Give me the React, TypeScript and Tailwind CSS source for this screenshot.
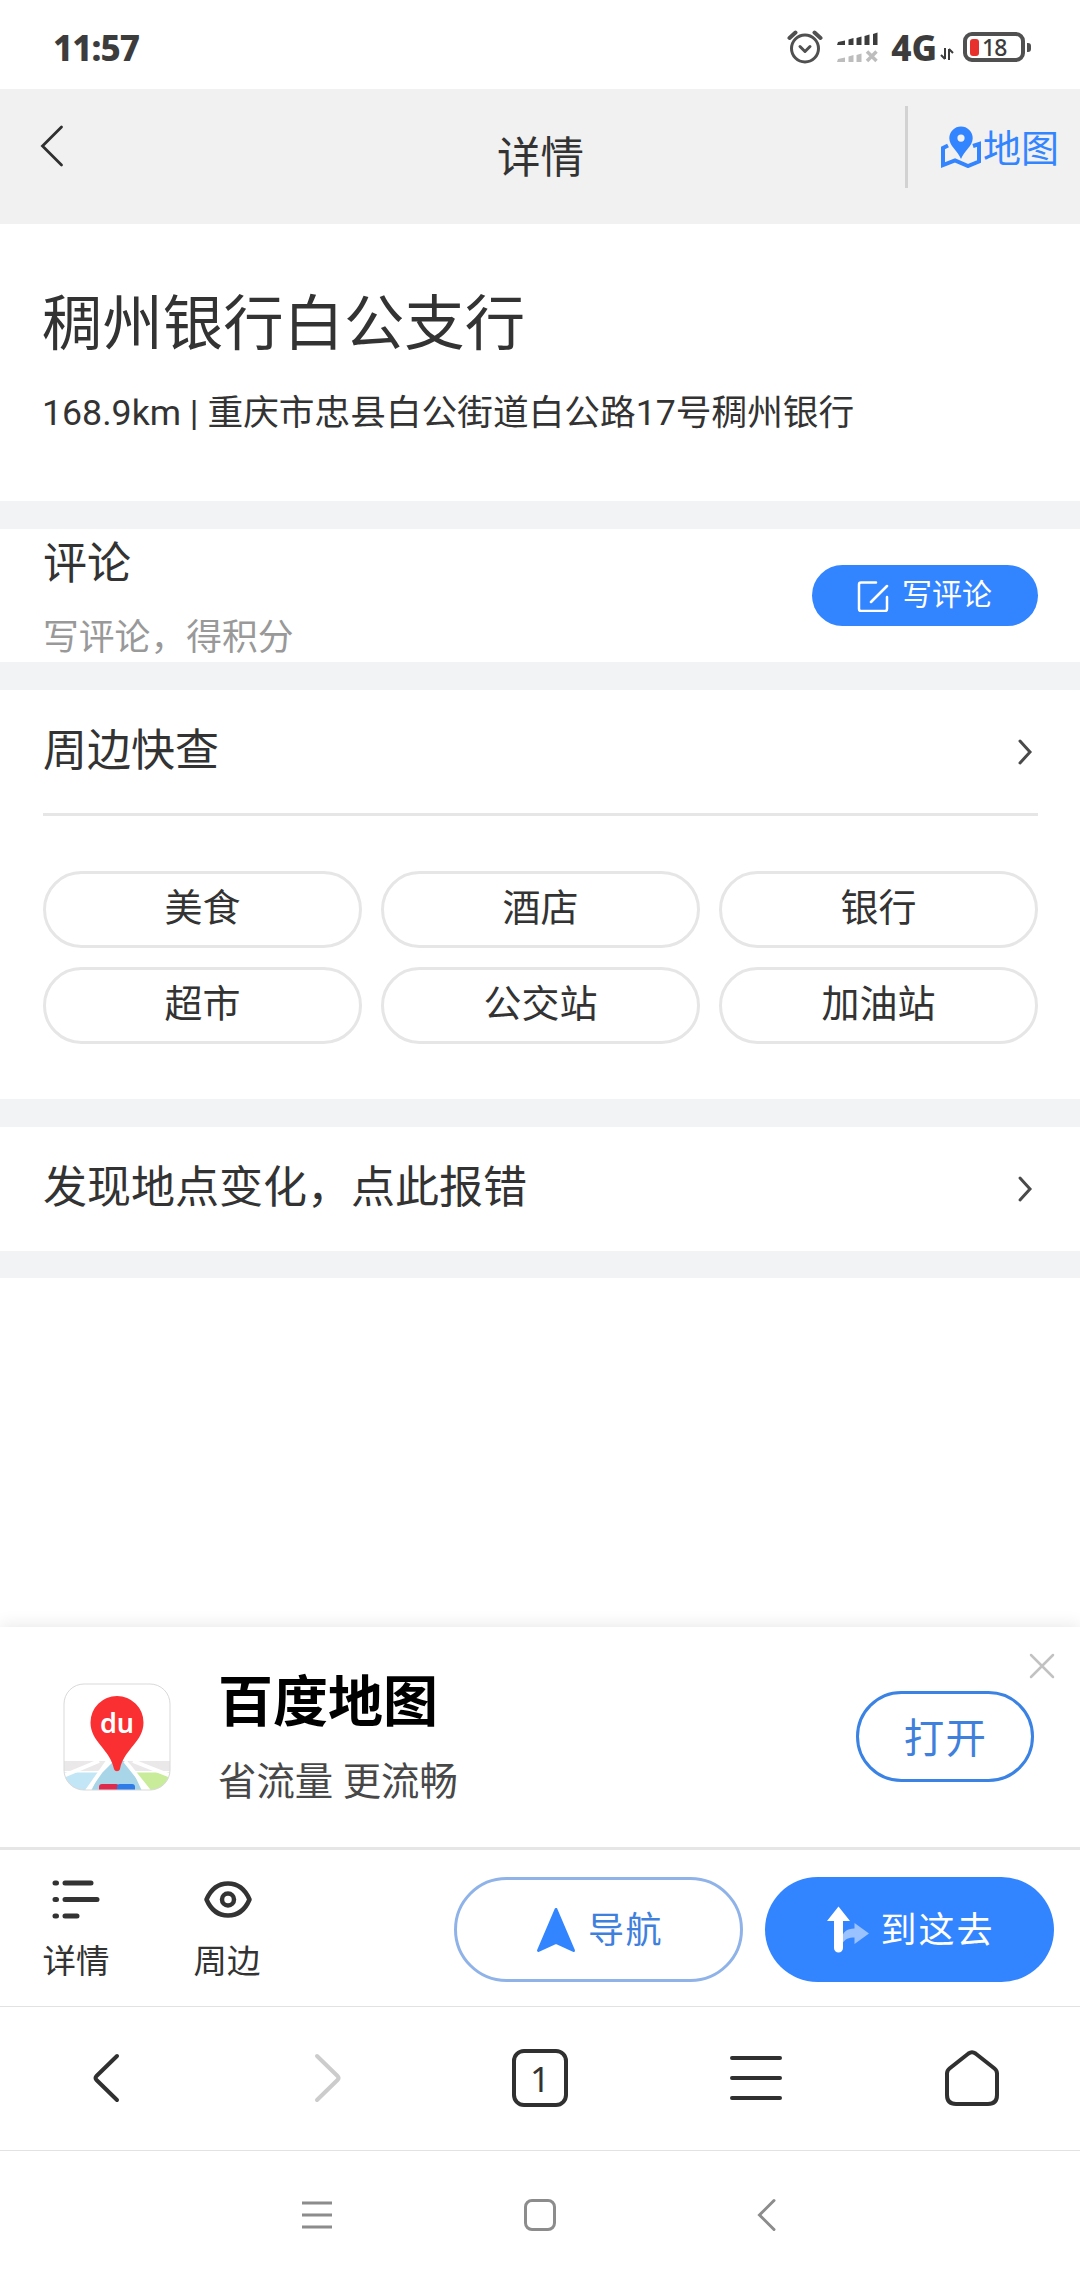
import React from 'react';

const nearby = ['美食', '酒店', '银行', '超市', '公交站', '加油站'];

const StatusBar: React.FC = () => (
  <div className="flex h-[89px] shrink-0 items-center bg-white pl-[53px] pr-[49px] text-[#3c3c3c]">
    <span className="mt-[5px] font-['Noto_Sans'] text-[35px] leading-none font-extrabold tracking-[-1px]">11:57</span>
    <div className="ml-auto flex items-center pt-[5px]">
      <svg width="36" height="36" viewBox="0 0 36 36" fill="none" stroke="#505050" strokeWidth="3" strokeLinecap="round" strokeLinejoin="round">
        <circle cx="18" cy="19.500" r="13.500" />
        <path d="M13 17.500l5 5 5-5" />
        <path d="M2.500 9L8.500 3.500M27.500 3.500l6 5.500" strokeWidth="4" />
      </svg>
      <svg className="ml-[14px]" width="42" height="36" viewBox="0 0 42 36">
        <g fill="#3c3c3c">
          <path d="M0 16l1-3 7-1.500V16zM11.500 10.500l5-1.500v7h-5zM19.500 9l5-1.500V16h-5zM27.500 7l5-1.500V16h-5zM36 5l4.500-1.500V16H36z" />
        </g>
        <g fill="#bdbdbd">
          <path d="M0 33l1-3 7-1.500V33zM11.500 27.500l5-1.500v7h-5zM19.500 26l5-1.500V33h-5z" />
        </g>
        <path d="M30 22.500l9.500 9.500M39.500 22.500L30 32" stroke="#bdbdbd" strokeWidth="3.500" />
      </svg>
      <span className="ml-[12px] font-['Noto_Sans'] text-[35px] leading-none font-extrabold">4G</span>
      <svg className="mt-[14px] ml-[3px]" width="14" height="14" viewBox="0 0 14 14" fill="none" stroke="#3c3c3c" strokeWidth="2">
        <path d="M5 1v11M5 12L1 8M9 13V2M9 2l4 4" />
      </svg>
      <div className="ml-[9px] flex h-[30px] w-[62px] items-center rounded-[9px] border-4 border-[#505050] pl-[3px]">
        <span className="h-[17px] w-[9px] rounded-[3px] bg-[#e8312c]" />
        <span className="ml-[3px] font-['Noto_Sans'] text-[23px] leading-none font-medium tracking-[-1px]">18</span>
      </div>
      <span className="ml-[2px] h-[9px] w-[4px] rounded-r-[3px] bg-[#505050]" />
    </div>
  </div>
);

const Header: React.FC = () => (
  <header className="grid h-[135px] shrink-0 grid-cols-[1fr_auto_1fr] bg-[#f1f1f1]">
    <svg className="mt-[35px] ml-[39px]" width="26" height="44" viewBox="0 0 26 44" fill="none" stroke="#2f2f2f" strokeWidth="2.800" strokeLinecap="round">
      <path d="M22.500 3L3.500 22l19 19" />
    </svg>
    <h1 className="mt-[40px] ml-px text-[43.5px] leading-[60px]">详情</h1>
    <div className="mt-[17px] ml-auto flex h-[82px] w-[175px] items-center border-l-[3px] border-[#d2d2d2] pl-[32px] text-[#3385ff]">
      <svg className="shrink-0" width="42" height="42" viewBox="0 0 42 42">
        <path d="M8 19.500l-5 2.500V39l12-4.500 13 5.500 11-4.500V18l-6 2" fill="none" stroke="#3385ff" strokeWidth="4" />
        <path fillRule="evenodd" fill="#3385ff" d="M21 0.500a11.700 11.700 0 0 1 11.700 11.700C32.700 20 24 25 21 33c-3-8-11.700-13-11.700-20.800A11.700 11.700 0 0 1 21 0.500zm0 8a3.600 3.600 0 1 0 0 7.200 3.600 3.600 0 0 0 0-7.200z" />
      </svg>
      <span className="mt-[4px] ml-[1px] text-[38px] leading-none whitespace-nowrap">地图</span>
    </div>
  </header>
);

const ArrowRight: React.FC = () => (
  <svg width="18" height="30" viewBox="0 0 18 30" fill="none" stroke="#4a4a4a" strokeWidth="3" strokeLinecap="round">
    <path d="M3 4l10 11L3 26" />
  </svg>
);

const Band: React.FC = () => <div className="h-[28px] shrink-0 bg-[#f2f3f5]" />;

const AppLogo: React.FC = () => (
  <svg width="108" height="108" viewBox="0 0 108 108">
    <defs>
      <clipPath id="logo">
        <rect x="1" y="1" width="106" height="106" rx="20" />
      </clipPath>
    </defs>
    <g clipPath="url(#logo)">
      <rect width="108" height="108" fill="#fff" />
      <path d="M0 78h108v10H0z" fill="#ebe8ea" />
      <path d="M0 89.500h37L22 108H0z" fill="#c2e6f6" />
      <path d="M71 89.500h37V108H88z" fill="#c9ec9b" />
      <path d="M43 78h22l14 30H28z" fill="#a9d5e8" />
      <path d="M0 93l36-15M36 90L48 78M24 108L45 78M108 93L70 78M86 108L62 78" stroke="#fff" strokeWidth="4" />
      <rect x="36" y="101" width="20" height="9" rx="3" fill="#de2b4d" />
      <rect x="54" y="101" width="18" height="9" rx="3" fill="#2f7be8" />
    </g>
    <path d="M54 13a26.500 26.500 0 0 1 26.500 26.500c0 19.500-19.500 26.500-23.500 46.500-1 3-5 3-6 0-4-20-23.500-27-23.500-46.500a26.500 26.500 0 0 1 26.500-26.500z" fill="#f92f31" />
    <text x="54" y="50" textAnchor="middle" fill="#fff" fontFamily="Noto Sans, sans-serif" fontWeight="600" fontSize="27">du</text>
    <rect x="1" y="1" width="106" height="106" rx="20" fill="none" stroke="#d9d9d9" />
  </svg>
);

const AppBanner: React.FC = () => (
  <div className="relative flex h-[223px] shrink-0 items-start border-b-[3px] border-[#e6e6e6] bg-white shadow-[0_-2px_16px_rgba(0,0,0,0.09)]">
    <div className="mt-[56px] ml-[63px]">
      <AppLogo />
    </div>
    <div className="mt-[40px] ml-[47px]">
      <p className="text-[55px] leading-[70px] font-bold text-black">百度地图</p>
      <p className="mt-[18px] text-[38.4px] leading-[54px] text-[#484848]">省流量 更流畅</p>
    </div>
    <button className="mt-[64px] mr-[46px] ml-auto flex h-[91px] w-[178px] items-center justify-center rounded-full border-[3px] border-[#3a82e4] pt-[5px] pl-px text-[40.5px] tracking-[1.2px] text-[#3f80dd]">
      打开
    </button>
    <svg className="absolute top-[25px] right-[24px]" width="28" height="28" viewBox="0 0 28 28" stroke="#c2c2c2" strokeWidth="2.500" strokeLinecap="round">
      <path d="M3 3l22 22M25 3L3 25" />
    </svg>
  </div>
);

const ActionBar: React.FC = () => (
  <div className="relative flex h-[157px] shrink-0 items-start border-b border-[#e2e2e2] bg-white">
    <div className="ml-[41px] flex w-[70px] flex-col items-center pt-[28px]">
      <svg width="50" height="43" viewBox="0 0 50 43" stroke="#333" strokeWidth="5" strokeLinecap="round">
        <path d="M4 5h1.500M4 21.500h1.500M4 38h1.500M14 5h26M14 21.500h32M14 38h12" />
      </svg>
      <span className="mt-[17px] text-[33.5px] leading-[48px] whitespace-nowrap">详情</span>
    </div>
    <div className="ml-[81px] flex w-[70px] flex-col items-center pt-[28px]">
      <svg className="ml-[2px]" width="50" height="43" viewBox="0 0 50 43" fill="none" stroke="#333" strokeWidth="4.500">
        <path d="M3.500 21.500C8 11 16 5.500 25 5.500S42 11 46.500 21.500C42 32 34 37.500 25 37.500S8 32 3.500 21.500z" strokeLinejoin="round" />
        <circle cx="25" cy="21.500" r="6" />
      </svg>
      <span className="mt-[17px] text-[33.5px] leading-[48px] whitespace-nowrap">周边</span>
    </div>
    <button className="mt-[27px] mr-[22px] ml-auto flex h-[105px] w-[289px] items-center justify-center rounded-full border-[3px] border-[#8fb3e8] text-[36px] tracking-[1.5px] text-[#3f80dd]">
      <svg width="42" height="48" viewBox="0 0 42 48" fill="#3385ff" stroke="#3385ff" strokeWidth="3" strokeLinejoin="round">
        <path d="M22 3.500l17.500 41-17.500-8-17.500 8z" />
      </svg>
      <span className="mt-[2px] ml-[12px]">导航</span>
    </button>
    <button className="mt-[27px] mr-[26px] flex h-[105px] w-[289px] items-center justify-center rounded-full bg-[#3385ff] text-[36px] tracking-[2px] text-white">
      <svg width="46" height="48" viewBox="0 0 46 48">
        <path d="M18 38V34c0-8 5-11.500 12.500-11.500V17L45 27.500 30.500 38v-6.500c-6 0-9 1.500-12.500 6z" fill="#9ac2ff" />
        <path d="M14.500 0.500L26 15h-7v27a4.500 4.500 0 0 1-9 0V15H3z" fill="#fff" />
      </svg>
      <span className="mt-[2px] ml-[10px]">到这去</span>
    </button>
  </div>
);

const BrowserBar: React.FC = () => (
  <nav className="grid h-[144px] shrink-0 grid-cols-5 place-items-center border-b border-[#e2e2e2] bg-white pb-[2px]">
    <svg className="mr-[5px]" width="30" height="52" viewBox="0 0 30 52" fill="none" stroke="#303030" strokeWidth="4" strokeLinecap="round" strokeLinejoin="round">
      <path d="M26 4L5.500 24q-2 2 0 4L26 48" />
    </svg>
    <svg className="ml-[7px]" width="30" height="52" viewBox="0 0 30 52" fill="none" stroke="#ccc" strokeWidth="4" strokeLinecap="round" strokeLinejoin="round">
      <path d="M4 4l20.500 20q2 2 0 4L4 48" />
    </svg>
    <div className="flex h-[58px] w-[56px] items-center justify-center rounded-[12px] border-4 border-[#303030] pt-[2px] font-['Noto_Sans'] text-[35px] leading-none">
      1
    </div>
    <svg width="54" height="48" viewBox="0 0 54 48" stroke="#303030" strokeWidth="4" strokeLinecap="round">
      <path d="M3 4h48M3 24h48M3 44h48" />
    </svg>
    <svg width="56" height="58" viewBox="0 0 56 58" fill="none" stroke="#303030" strokeWidth="4" strokeLinejoin="round">
      <path d="M24.500 4.500q3.500-2.500 7 0l19 15q2.500 2 2.500 5V46q0 9-9 9H12q-9 0-9-9V24.500q0-3 2.500-5z" />
    </svg>
  </nav>
);

const SystemBar: React.FC = () => (
  <nav className="flex h-[129px] shrink-0 justify-center bg-white pt-[47px] pr-[3px]">
    <svg width="34" height="34" viewBox="0 0 34 34" stroke="#8c8c8c" strokeWidth="3">
      <path d="M2 5h30M2 17h30M2 29h30" />
    </svg>
    <svg className="ml-[189px]" width="34" height="34" viewBox="0 0 34 34" fill="none" stroke="#8c8c8c" strokeWidth="3">
      <rect x="2.500" y="2.500" width="29" height="29" rx="6.500" />
    </svg>
    <svg className="ml-[199px]" width="22" height="34" viewBox="0 0 22 34" fill="none" stroke="#8c8c8c" strokeWidth="3" strokeLinecap="round">
      <path d="M18 2.500L3.500 17 18 31.500" />
    </svg>
  </nav>
);

const App: React.FC = () => {
  return (
    <div className="flex h-[2280px] w-[1080px] flex-col overflow-hidden bg-white font-['Roboto','Noto_Sans_CJK_SC',sans-serif] text-[#333]">
      <StatusBar />
      <Header />

      <section className="h-[277px] shrink-0 pt-[55px] pl-[42px]">
        <h2 className="text-[60.4px] leading-[92px]">稠州银行白公支行</h2>
        <p className="mt-[15px] text-[35.7px] leading-[54px]">168.9km | 重庆市忠县白公街道白公路17号稠州银行</p>
      </section>
      <Band />

      <section className="flex h-[133px] shrink-0 items-center justify-between pr-[42px] pl-[43px]">
        <div className="pt-[5px]">
          <h3 className="text-[44px] leading-[66px]">评论</h3>
          <p className="mt-[14px] text-[35.8px] leading-[54px] text-[#999]">写评论，得积分</p>
        </div>
        <button className="flex h-[61px] w-[226px] items-center justify-center rounded-full bg-[#3385ff] text-[30px] text-white">
          <svg width="32" height="32" viewBox="0 0 32 32" fill="none" stroke="#fff" strokeWidth="2.500" strokeLinecap="round" strokeLinejoin="round">
            <path d="M19 2.500H4q-2 0-2 2V29q0 2 2 2h24q2 0 2-2V17M30 6L14 22" />
          </svg>
          <span className="mr-px mb-[3px] ml-[13px]">写评论</span>
        </button>
      </section>
      <Band />

      <section className="h-[409px] shrink-0 pr-[42px] pl-[43px]">
        <div className="flex h-[126px] items-center justify-between border-b-[3px] border-[#e6e6e6] pr-[3px]">
          <h3 className="mb-[2px] text-[44px] leading-[60px]">周边快查</h3>
          <ArrowRight />
        </div>
        <div className="mt-[55px] grid grid-cols-3 gap-x-[19px] gap-y-[19px]">
          {nearby.map((name) => (
            <button key={name} className="flex h-[77px] items-center justify-center rounded-full border-[3px] border-[#e6e6e6] pb-[3px] text-[38px] leading-none">
              {name}
            </button>
          ))}
        </div>
      </section>
      <Band />

      <section className="flex h-[124px] shrink-0 items-center justify-between pr-[45px] pl-[43px]">
        <h3 className="mb-[2px] text-[44px] leading-[60px]">发现地点变化，点此报错</h3>
        <ArrowRight />
      </section>
      <div className="h-[27px] shrink-0 bg-[#f2f3f5]" />

      <div className="flex-1" />
      <AppBanner />
      <ActionBar />
      <BrowserBar />
      <SystemBar />
    </div>
  );
};

export default App;
